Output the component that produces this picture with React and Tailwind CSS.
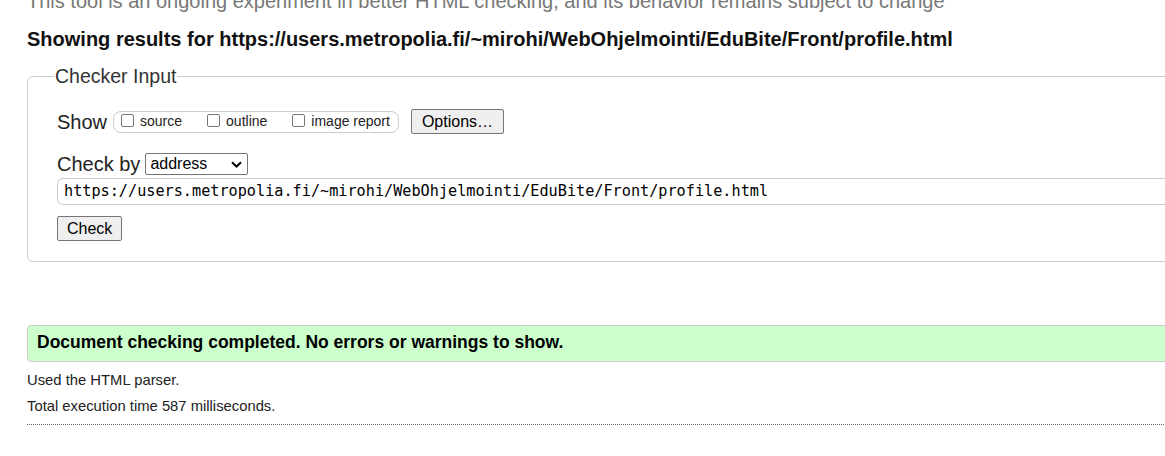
import React from 'react';

const url = 'https://users.metropolia.fi/~mirohi/WebOhjelmointi/EduBite/Front/profile.html';

function Box({ label }) {
  return (
    <label className="flex items-center">
      <input type="checkbox" className="appearance-none w-[13px] h-[13px] border border-[#767676] rounded-[2px] bg-white mb-[3px]" />
      <span className="ml-[6px] text-[14px] text-[#222]">{label}</span>
    </label>
  );
}

export default function App() {
  return (
    <div className="w-full overflow-hidden bg-white min-h-screen" style={{ fontFamily: '"Liberation Sans", Arial, sans-serif' }}>
      <div className="w-[1240px] pl-[27px]">
        <p className="-mt-[11px] text-[20px] leading-[24px] text-[#777] whitespace-nowrap">
          This tool is an ongoing experiment in better HTML checking, and its behavior remains subject to change
        </p>
        <h2 className="mt-[14px] text-[20px] leading-[24px] font-bold text-[#111] whitespace-nowrap">
          Showing results for {url}
        </h2>

        <fieldset className="mt-[13px] border border-[#ccc] rounded-[6px] pb-[20px]">
          <legend className="ml-[26px] px-[1px] text-[19.5px] leading-[24px] text-[#333]">Checker Input</legend>

          <div className="pl-[29px]">
            <div className="mt-[21px] flex items-center h-[25px]">
              <span className="text-[20px] text-[#222]">Show</span>
              <div className="ml-[6px] h-[22px] flex items-center border border-[#ccc] rounded-[8px] pl-[7px] pr-[8px] gap-[25px]">
                <Box label="source" />
                <Box label="outline" />
                <Box label="image report" />
              </div>
              <button className="ml-[12px] h-[25px] px-[10px] border border-[#767676] rounded-[2px] bg-[#efefef] text-[16px] text-black">
                Options…
              </button>
            </div>

            <div className="mt-[19px] flex items-center h-[22px]">
              <span className="text-[20px] text-[#222]">Check by</span>
              <div className="ml-[5px] w-[103px] h-[22px] flex items-center justify-between border border-[#767676] rounded-[2px] bg-white pl-[4px] pr-[5px]">
                <span className="text-[16px] text-black">address</span>
                <svg width="11" height="7" viewBox="0 0 11 7" fill="none">
                  <path d="M1 1.2 L5.5 5.5 L10 1.2" stroke="#000" strokeWidth="2" />
                </svg>
              </div>
            </div>

            <div className="mt-[3px] h-[27px] flex items-center border border-[#ccc] rounded-[6px] pl-[6px] -mr-[2px]">
              <span className="text-[15.2px] text-black whitespace-nowrap" style={{ fontFamily: '"DejaVu Sans Mono", monospace' }}>{url}</span>
            </div>

            <button className="mt-[11px] h-[25px] px-[9px] border border-[#767676] rounded-[2px] bg-[#efefef] text-[16px] text-black">
              Check
            </button>
          </div>
        </fieldset>

        <div className="mt-[63px] border border-[#ccc] rounded-[4px] bg-[#ccffcc] pl-[9px] pt-[6px] pb-[9px]">
          <p className="text-[17.5px] leading-[20px] font-bold text-black whitespace-nowrap">
            Document checking completed. No errors or warnings to show.
          </p>
        </div>

        <p className="mt-[8px] text-[14.8px] leading-[20px] text-[#222]">Used the HTML parser.</p>
        <p className="mt-[6px] text-[14.8px] leading-[20px] text-[#222]">Total execution time 587 milliseconds.</p>
        <div className="mt-[8px] border-t border-dotted border-[#666]" />
      </div>
    </div>
  );
}
